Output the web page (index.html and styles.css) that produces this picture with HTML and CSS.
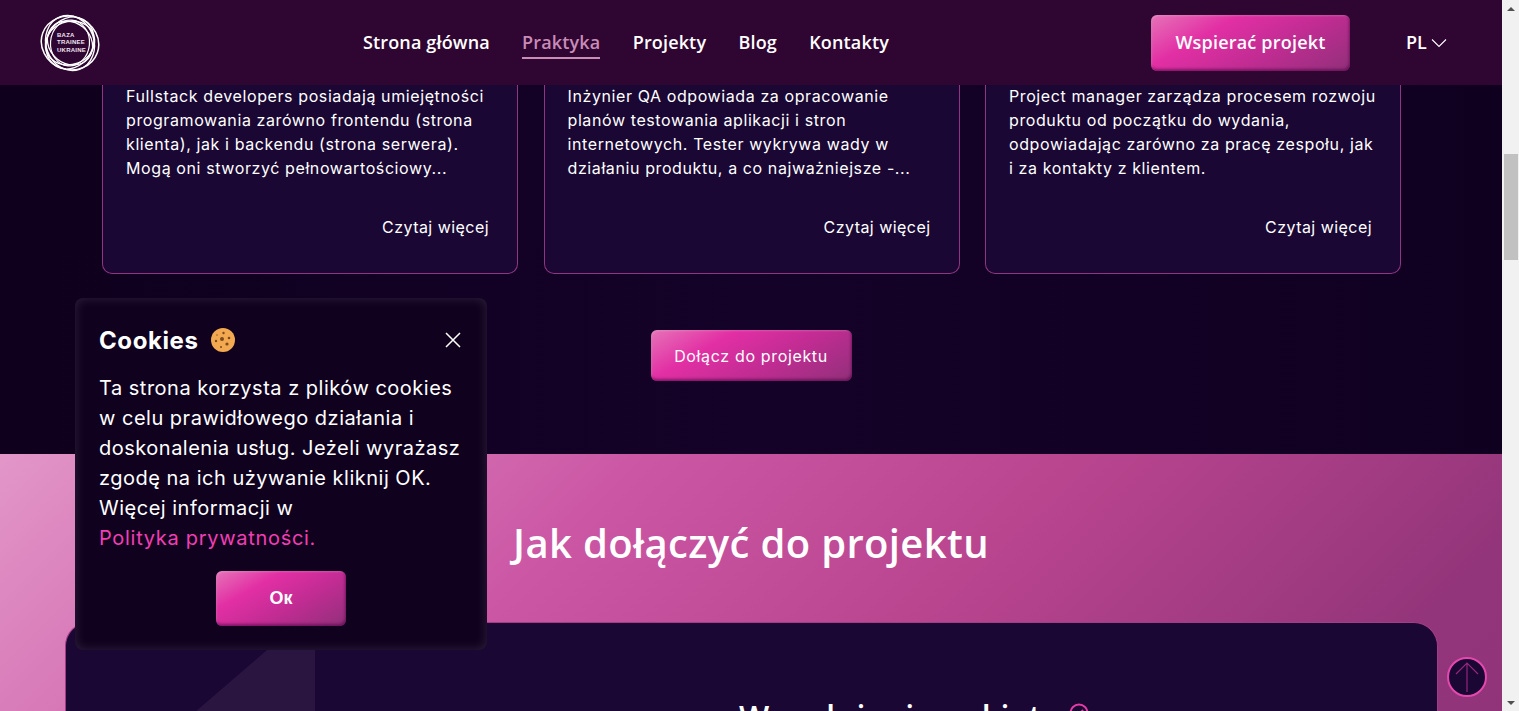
FILE: index.html
```html
<!DOCTYPE html>
<html lang="pl">
<head>
<meta charset="utf-8">
<title>Baza Trainee Ukraine</title>
<link rel="stylesheet" href="styles.css">
</head>
<body>
<div class="window">
  <div class="page">
    <header class="header">
      <a class="logo" href="#" aria-label="Baza Trainee Ukraine">
        <svg class="logo-rings" viewBox="0 0 60 60" fill="none" stroke="#fff">
          <ellipse cx="30" cy="30" rx="29" ry="26.5" stroke-width="1.5" transform="rotate(20 30 30)"/>
          <ellipse cx="30" cy="30" rx="28" ry="24" stroke-width="1.4" transform="rotate(70 30 30)"/>
          <ellipse cx="30" cy="30" rx="27" ry="23" stroke-width="1.4" transform="rotate(120 30 30)"/>
          <ellipse cx="30" cy="30" rx="25" ry="21.5" stroke-width="1.3" transform="rotate(160 30 30)"/>
          <ellipse cx="30" cy="30" rx="24" ry="20.5" stroke-width="1.3" transform="rotate(40 30 30)"/>
          <ellipse cx="30" cy="30" rx="23" ry="19.5" stroke-width="1.2" transform="rotate(95 30 30)"/>
        </svg>
        <span class="logo-text">BAZA<br>TRAINEE<br>UKRAINE</span>
      </a>
      <nav class="nav">
        <a href="#">Strona główna</a>
        <a href="#" class="active">Praktyka</a>
        <a href="#">Projekty</a>
        <a href="#">Blog</a>
        <a href="#">Kontakty</a>
      </nav>
      <a href="#" class="btn btn-support">Wspierać projekt</a>
      <div class="lang">PL
        <svg width="16" height="10" viewBox="0 0 16 10" fill="none" stroke="#fff" stroke-width="1.1"><path d="M1 1.5l7 7 7-7"/></svg>
      </div>
    </header>

    <section class="roles">
      <div class="cards">
        <article class="card">
          <p>Fullstack developers posiadają umiejętności<br>programowania zarówno frontendu (strona<br>klienta), jak i backendu (strona serwera).<br>Mogą oni stworzyć pełnowartościowy...</p>
          <a href="#">Czytaj więcej</a>
        </article>
        <article class="card">
          <p>Inżynier QA odpowiada za opracowanie<br>planów testowania aplikacji i stron<br>internetowych. Tester wykrywa wady w<br>działaniu produktu, a co najważniejsze -...</p>
          <a href="#">Czytaj więcej</a>
        </article>
        <article class="card">
          <p>Project manager zarządza procesem rozwoju<br>produktu od początku do wydania,<br>odpowiadając zarówno za pracę zespołu, jak<br>i za kontakty z klientem.</p>
          <a href="#">Czytaj więcej</a>
        </article>
      </div>
      <a href="#" class="btn btn-join">Dołącz do projektu</a>
    </section>

    <section class="howto">
      <h2>Jak dołączyć do projektu</h2>
      <div class="panel">
        <div class="panel-art"></div>
        <h3>Wypełnienie ankiety
          <svg class="check" width="28" height="28" viewBox="0 0 28 28" fill="none" stroke="#e23ba6" stroke-width="2"><circle cx="10" cy="10" r="8.5"/><path d="M6 10l3 3 5-6"/></svg>
        </h3>
      </div>
    </section>

    <aside class="cookies">
      <div class="cookies-head">
        <strong>Cookies</strong>
        <svg class="cookie-icon" width="24" height="24" viewBox="0 0 24 24">
          <circle cx="12" cy="12" r="12" fill="#f2a950"/>
          <g fill="#7c4a20">
            <circle cx="11" cy="11" r="2"/><circle cx="12.5" cy="5" r="1.2"/><circle cx="18" cy="10" r="1.3"/>
            <circle cx="5" cy="13" r="1.2"/><circle cx="16" cy="16" r="1.6"/><circle cx="10" cy="19" r="1"/><circle cx="6" cy="7" r=".7"/>
          </g>
        </svg>
        <button class="cookies-close" aria-label="Zamknij">
          <svg width="16" height="16" viewBox="0 0 16 16" stroke="#fff" stroke-width="1.5" fill="none"><path d="M1 1l14 14M15 1L1 15"/></svg>
        </button>
      </div>
      <p>Ta strona korzysta z plików cookies<br>w celu prawidłowego działania i<br>doskonalenia usług. Jeżeli wyrażasz<br>zgodę na ich używanie kliknij OK.<br>Więcej informacji w<br><a href="#">Polityka prywatności.</a></p>
      <a href="#" class="btn btn-ok">Ок</a>
    </aside>

    <a href="#" class="to-top" aria-label="Do góry">
      <svg width="24" height="32" viewBox="0 0 24 32" fill="none" stroke="#94277c" stroke-width="1.2"><path d="M12 31V2M1 13L12 2l11 11"/></svg>
    </a>
  </div>
  <div class="scrollbar">
    <span class="arrow up"></span>
    <div class="track"><div class="thumb"></div></div>
    <span class="arrow down"></span>
  </div>
</div>
</body>
</html>
```
FILE: styles.css
```css
* { box-sizing: border-box; }
html, body { margin: 0; height: 100%; overflow: hidden; }
body { font-family: "Inter", "Liberation Sans", sans-serif; color: #fff; background: #0f0020; }
a { color: inherit; text-decoration: none; }
p, h2, h3 { margin: 0; }

.window { display: flex; width: 1519px; height: 711px; }
.page { position: relative; width: 1502px; height: 711px; overflow: hidden; display: flex; flex-direction: column; }

.header { flex: none; height: 85px; background: #2f0532; display: flex; align-items: center; padding-left: 40px; position: relative; z-index: 2; }
.logo { position: relative; width: 60px; height: 60px; flex: none; }
.logo-rings { width: 60px; height: 60px; display: block; }
.logo-text { position: absolute; left: 17px; top: 19px; font: 700 6px/7.5px "Liberation Sans", sans-serif; letter-spacing: .25px; color: #efe4ef; }
.nav { display: flex; gap: 32.3px; margin-left: 263px; margin-top: 3px; font: 600 18px/25px "Open Sans", sans-serif; letter-spacing: .15px; }
.nav a { padding-bottom: 2px; border-bottom: 2px solid transparent; }
.nav a.active { color: #c88cb6; border-bottom-color: #c88cb6; }

.btn { display: flex; align-items: center; justify-content: center; color: #fff; border-radius: 6px;
  background: linear-gradient(150deg, #e673b8 0%, #e22fa4 30%, #c02c92 62%, #91307a 100%);
  box-shadow: inset -1px -2px 3px rgba(80,0,70,.6), inset 1px 1px 2px rgba(255,255,255,.2); }
.btn-support { width: 199px; height: 56px; margin-left: 262px; font: 600 18px/25px "Open Sans", sans-serif; letter-spacing: .2px; }
.lang { display: flex; align-items: center; gap: 4px; margin-left: 56px; font: 600 18px/25px "Open Sans", sans-serif; }

.roles { flex: none; height: 369px; background: linear-gradient(90deg, #0f001d, #140228 50%, #100020); display: flex; flex-direction: column; align-items: center; }
.cards { display: grid; grid-template-columns: repeat(3, 416px); column-gap: 25.5px; align-self: flex-start; margin-left: 102px; }
.card { height: 189px; border: 1px solid #8f3582; border-top: 0; border-radius: 0 0 10px 10px; background: #1a0733; padding: 0 28px 0 23px; display: flex; flex-direction: column; }
.card p { font-size: 16px; line-height: 24px; letter-spacing: .6px; height: 131px; margin-top: -1px; white-space: nowrap; }
.card a { align-self: flex-end; font-size: 16px; line-height: 24px; letter-spacing: .45px; }
.btn-join { width: 201px; height: 51px; margin-top: 56px; font-size: 16px; letter-spacing: .65px; }

.howto { flex: 1; position: relative; padding-top: 62px; background: linear-gradient(135deg, #e296c8 0%, #cb56a4 35%, #b9458f 58%, #93357a 85%, #8f3378 100%); }
.howto h2 { font: 600 40px/54px "Open Sans", sans-serif; letter-spacing: .35px; text-align: center; }
.panel { position: relative; margin: 52px 64px 0 65px; height: 200px; background: #1a0733; border-radius: 24px 24px 0 0; border: 1px solid #a23c88; border-bottom: 0; overflow: hidden; }
.panel-art { position: absolute; left: 129px; top: 27px; width: 120px; height: 100px; background: #2a1440; clip-path: polygon(100% 0, 100% 100%, 0 100%, 0 62%, 60% 0); }
.panel h3 { position: absolute; left: 673px; top: 74px; font: 600 32px/40px "Open Sans", sans-serif; letter-spacing: .4px; white-space: nowrap; display: flex; gap: 10px; }
.check { margin-top: 6px; }

.cookies { position: absolute; left: 75px; top: 298px; width: 412px; height: 352px; z-index: 3; padding: 24px; border-radius: 8px; background: #10021f; box-shadow: inset 0 0 12px rgba(255,255,255,.13); display: flex; flex-direction: column; }
.cookies-head { display: flex; align-items: center; gap: 12.5px; height: 36px; font-size: 24px; margin-bottom: 15px; padding-right: 2px; }
.cookies-head strong { font-weight: 700; letter-spacing: .6px; }
.cookies-close { margin-left: auto; width: 16px; height: 16px; padding: 0; border: 0; background: none; }
.cookies-close svg { display: block; }
.cookies p { font-size: 20px; line-height: 30px; letter-spacing: .5px; white-space: nowrap; }
.cookies p a { color: #f23eb4; letter-spacing: .7px; }
.btn-ok { width: 130px; height: 55px; margin: 18px auto 0; font: 700 18px "Liberation Sans", sans-serif; }

.to-top { position: absolute; left: 1447px; top: 657px; width: 40px; height: 40px; border-radius: 50%; border: 2px solid #e447ad; background: #1a0733; display: flex; align-items: center; justify-content: center; z-index: 2; }

.scrollbar { width: 17px; height: 711px; background: #f1f1f1; display: flex; flex-direction: column; align-items: center; }
.arrow { flex: none; width: 17px; height: 17px; display: flex; align-items: center; justify-content: center; }
.arrow::before { content: ""; border-left: 4px solid transparent; border-right: 4px solid transparent; }
.arrow.up::before { border-bottom: 4px solid #505050; }
.arrow.down::before { border-top: 4px solid #505050; }
.track { flex: 1; width: 100%; padding: 137px 1px 0 2px; }
.thumb { width: 100%; height: 106px; background: #c1c1c1; }
```
